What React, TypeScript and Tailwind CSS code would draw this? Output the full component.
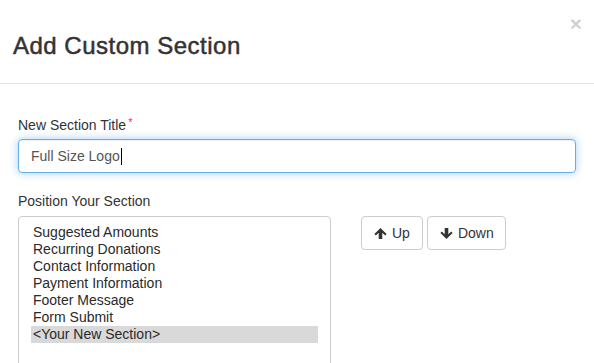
import React from "react";

function ArrowUp() {
  return (
    <svg width="13" height="11" viewBox="0 0 13 11" className="shrink-0">
      <path d="M6.5 0 L12.6 6.1 L11.2 7.5 L8.3 4.7 L8.3 11 L4.7 11 L4.7 4.7 L1.8 7.5 L0.4 6.1 Z" fill="#333" />
    </svg>
  );
}

function ArrowDown() {
  return (
    <svg width="13" height="11" viewBox="0 0 13 11" className="shrink-0">
      <path d="M6.5 11 L12.6 4.9 L11.2 3.5 L8.3 6.3 L8.3 0 L4.7 0 L4.7 6.3 L1.8 3.5 L0.4 4.9 Z" fill="#333" />
    </svg>
  );
}

const items = [
  "Suggested Amounts",
  "Recurring Donations",
  "Contact Information",
  "Payment Information",
  "Footer Message",
  "Form Submit",
  "<Your New Section>",
];

export default function App() {
  return (
    <div
      className="h-[363px] w-[594px] overflow-hidden bg-white text-[#333]"
      style={{ fontFamily: '"Liberation Sans", Arial, Helvetica, sans-serif' }}
    >
      <div className="flex items-start justify-between border-b border-[#e5e5e5] pl-[13px] pr-[12px] pt-[33px] pb-[24px]">
        <h4 className="text-[24px] font-normal leading-[1.1] tracking-[0.5px] text-[#333] [-webkit-text-stroke:0.5px_#333]">
          Add Custom Section
        </h4>
        <button className="-mt-[20px] text-[21px] font-bold leading-none text-black/20">
          ×
        </button>
      </div>
      <div className="px-[18px] pt-[31px]">
        <label className="mb-[4px] block text-[14px] leading-[20px] text-[#333]">
          New Section Title
          <span className="relative -top-[4px] ml-[2px] text-[11px] leading-none text-[#e53935]">*</span>
        </label>
        <div className="flex h-[34px] w-full items-center rounded-[4px] border border-[#66afe9] px-[12px] text-[14px] text-[#555] shadow-[inset_0_1px_1px_rgba(0,0,0,0.075),0_0_8px_rgba(102,175,233,0.6)]">
          <span>Full Size Logo</span>
          <span className="ml-[1px] inline-block h-[17px] w-[1px] bg-black" />
        </div>
        <label className="mt-[18px] mb-[5px] block text-[14px] leading-[20px] text-[#333]">
          Position Your Section
        </label>
        <div className="flex items-start gap-[30px]">
          <div className="h-[170px] w-[313px] shrink-0 rounded-[4px] border border-[#ccc] px-[12px] pt-[7px] text-[14px] leading-[17px] text-[#2a2a2a]">
            {items.map((it, i) => (
              <div key={it} className={i === items.length - 1 ? "bg-[#d9d9d9] px-[2px]" : "px-[2px]"}>
                {it}
              </div>
            ))}
          </div>
          <div className="flex gap-[4px]">
            <button className="flex h-[34px] items-center gap-[5px] rounded-[4px] border border-[#ccc] bg-white px-[12px] text-[14px] text-[#333]">
              <ArrowUp />
              Up
            </button>
            <button className="flex h-[34px] items-center gap-[5px] rounded-[4px] border border-[#ccc] bg-white pl-[12px] pr-[11px] text-[14px] text-[#333]">
              <ArrowDown />
              Down
            </button>
          </div>
        </div>
      </div>
    </div>
  );
}
